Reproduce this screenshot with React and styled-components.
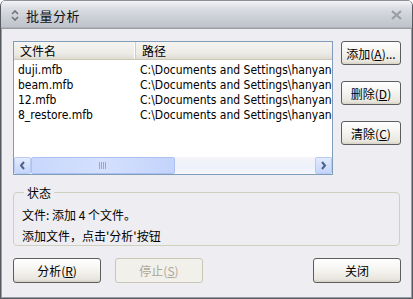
import React from 'react';
import styled, { createGlobalStyle } from 'styled-components';

const GlobalStyle = createGlobalStyle`
  html, body {
    margin: 0;
    padding: 0;
    background: #ffffff;
  }
`;

const cjk = `"Noto Sans CJK SC", "DejaVu Sans", sans-serif`;
const latin = `"DejaVu Sans Condensed", "DejaVu Sans", "Noto Sans CJK SC", sans-serif`;

// --- Ventana ---

const Window = styled.div`
  width: 413px;
  height: 299px;
  box-sizing: border-box;
  display: flex;
  flex-direction: column;
  background: #eeeef2;
  border: 1px solid #555a60;
  border-top: none;
  border-radius: 6px 6px 0 0;
  overflow: hidden;
  box-shadow: inset 1px 0 0 #9a9ea6, inset -1px 0 0 #9a9ea6, inset 0 -1px 0 #9a9ea6;
`;

const TitleBar = styled.div`
  height: 29px;
  flex: none;
  display: flex;
  align-items: center;
  padding: 0 10px 0 10px;
  gap: 7px;
  box-sizing: border-box;
  background: linear-gradient(#f3f4f6 0%, #dcdee3 25%, #cbced5 60%, #bfc3ca 92%, #8e9299 100%);
  border-top: 1px solid #8d9097;
`;

const TitleText = styled.span`
  font-family: ${cjk};
  font-size: 13px;
  color: #111;
  flex: 1;
  letter-spacing: 0.5px;
`;

const Body = styled.div`
  flex: 1;
  display: flex;
  flex-direction: column;
  padding: 12px 10px 0 12px;
`;

// --- Lista ---

const TopRow = styled.div`
  display: flex;
  gap: 8px;
`;

const ListBox = styled.div`
  width: 320px;
  height: 134px;
  box-sizing: border-box;
  border: 1px solid #7f9db9;
  background: #fff;
  display: flex;
  flex-direction: column;
`;

const Header = styled.div`
  height: 17px;
  flex: none;
  display: grid;
  grid-template-columns: 122px 1fr;
  background: linear-gradient(#f6f5f1, #ebeae5 70%, #dedbd0);
  border-bottom: 1px solid #cbc7b8;
`;

const HeaderCell = styled.div`
  font-family: ${cjk};
  font-size: 12px;
  line-height: 17px;
  color: #000;
  padding-left: 6px;
  border-right: ${(p) => (p.$divider ? '1px solid #d0ccbd' : 'none')};
  box-shadow: ${(p) => (p.$divider ? 'inset -1px 0 0 #fff' : 'none')};
`;

const Rows = styled.div`
  flex: 1;
  padding-top: 3px;
`;

const Row = styled.div`
  display: grid;
  grid-template-columns: 122px 1fr;
  height: 15px;
  font-family: ${latin};
  font-size: 12px;
  line-height: 15px;
  color: #000;
  white-space: nowrap;
  overflow: hidden;
`;

const Cell = styled.span`
  padding-left: 4px;
  overflow: hidden;
`;

const ScrollBar = styled.div`
  height: 17px;
  flex: none;
  display: flex;
  background: linear-gradient(#f4f4f9, #eef0fb 60%, #f6f7fd);
`;

const ScrollButton = styled.div`
  width: 17px;
  height: 17px;
  box-sizing: border-box;
  border: 1px solid #b9cbf3;
  border-radius: 2px;
  background: linear-gradient(#e3ebfd, #c4d5fb);
  display: flex;
  align-items: center;
  justify-content: center;
`;

const Thumb = styled.div`
  width: 144px;
  height: 17px;
  box-sizing: border-box;
  border: 1px solid #aec2f2;
  border-radius: 2px;
  background: linear-gradient(90deg, #c8d7fc, #d4e0fd 50%, #c3d3fb);
  display: flex;
  align-items: center;
  justify-content: center;
`;

const Track = styled.div`
  flex: 1;
`;

// --- Botones ---

const SideButtons = styled.div`
  display: flex;
  flex-direction: column;
  gap: 16px;
`;

const Button = styled.button`
  width: ${(p) => p.$w || 60}px;
  height: ${(p) => p.$h || 24}px;
  box-sizing: border-box;
  padding: 0;
  border: 1px solid ${(p) => (p.disabled ? '#c9c7ba' : '#5d5d5d')};
  border-radius: 3px;
  background: ${(p) =>
    p.disabled ? '#f1f0ea' : 'linear-gradient(#ffffff, #f4f3ef 50%, #e8e6de 88%, #d6d1c4)'};
  font-family: ${cjk};
  font-size: 12px;
  color: ${(p) => (p.disabled ? '#aca899' : '#000')};
  cursor: default;

  u {
    text-decoration-thickness: 1px;
    text-underline-offset: 1px;
  }
`;

// --- Estado ---

const Group = styled.fieldset`
  margin: 9px 0 0 0;
  width: 387px;
  height: 62px;
  box-sizing: border-box;
  padding: 3px 8px 0 8px;
  border: 1px solid #d0d0bf;
  border-radius: 4px;
`;

const Legend = styled.legend`
  font-family: ${cjk};
  font-size: 12px;
  color: #000;
  padding: 0 3px;
  margin-left: 2px;
`;

const StatusLine = styled.div`
  font-family: ${cjk};
  font-size: 12px;
  line-height: 21px;
  color: #000;
`;

const BottomRow = styled.div`
  display: flex;
  margin-top: 12px;
  width: 388px;
  gap: 14px;
`;

const Spacer = styled.div`
  flex: 1;
`;

const UpDownIcon = () => (
  <svg width="8" height="11" viewBox="0 0 8 11">
    <path d="M1 4 L4 1 L7 4" fill="none" stroke="#6e7178" strokeWidth="1.6" />
    <path d="M1 7 L4 10 L7 7" fill="none" stroke="#6e7178" strokeWidth="1.6" />
  </svg>
);

const CloseIcon = () => (
  <svg width="11" height="10" viewBox="0 0 11 10">
    <path d="M1 1 L10 9 M10 1 L1 9" stroke="#9a9da4" strokeWidth="2.2" />
  </svg>
);

const Arrow = ({ dir }) => (
  <svg width="7" height="9" viewBox="0 0 7 9">
    <path
      d={dir === 'left' ? 'M5 1 L2 4.5 L5 8' : 'M2 1 L5 4.5 L2 8'}
      fill="none"
      stroke="#4d6185"
      strokeWidth="2"
    />
  </svg>
);

const Grip = () => (
  <svg width="8" height="7" viewBox="0 0 8 7">
    {[0, 2, 4, 6].map((x) => (
      <line key={x} x1={x + 0.5} y1="0" x2={x + 0.5} y2="7" stroke="#8ea7e4" strokeWidth="1" />
    ))}
  </svg>
);

const files = ['duji.mfb', 'beam.mfb', '12.mfb', '8_restore.mfb'];

const App = () => {
  return (
    <>
      <GlobalStyle />
      <Window>
        <TitleBar>
          <UpDownIcon />
          <TitleText>批量分析</TitleText>
          <CloseIcon />
        </TitleBar>
        <Body>
          <TopRow>
            <ListBox>
              <Header>
                <HeaderCell $divider>文件名</HeaderCell>
                <HeaderCell>路径</HeaderCell>
              </Header>
              <Rows>
                {files.map((f) => (
                  <Row key={f}>
                    <Cell>{f}</Cell>
                    <Cell>C:\Documents and Settings\hanyang</Cell>
                  </Row>
                ))}
              </Rows>
              <ScrollBar>
                <ScrollButton>
                  <Arrow dir="left" />
                </ScrollButton>
                <Thumb>
                  <Grip />
                </Thumb>
                <Track />
                <ScrollButton>
                  <Arrow dir="right" />
                </ScrollButton>
              </ScrollBar>
            </ListBox>
            <SideButtons>
              <Button>
                添加(<u>A</u>)...
              </Button>
              <Button>
                删除(<u>D</u>)
              </Button>
              <Button>
                清除(<u>C</u>)
              </Button>
            </SideButtons>
          </TopRow>
          <Group>
            <Legend>状态</Legend>
            <StatusLine>文件: 添加 4 个文件。</StatusLine>
            <StatusLine>添加文件，点击'分析'按钮</StatusLine>
          </Group>
          <BottomRow>
            <Button $w={88} $h={25}>
              分析(<u>R</u>)
            </Button>
            <Button $w={88} $h={25} disabled>
              停止(<u>S</u>)
            </Button>
            <Spacer />
            <Button $w={88} $h={25}>
              关闭
            </Button>
          </BottomRow>
        </Body>
      </Window>
    </>
  );
};

export default App;
